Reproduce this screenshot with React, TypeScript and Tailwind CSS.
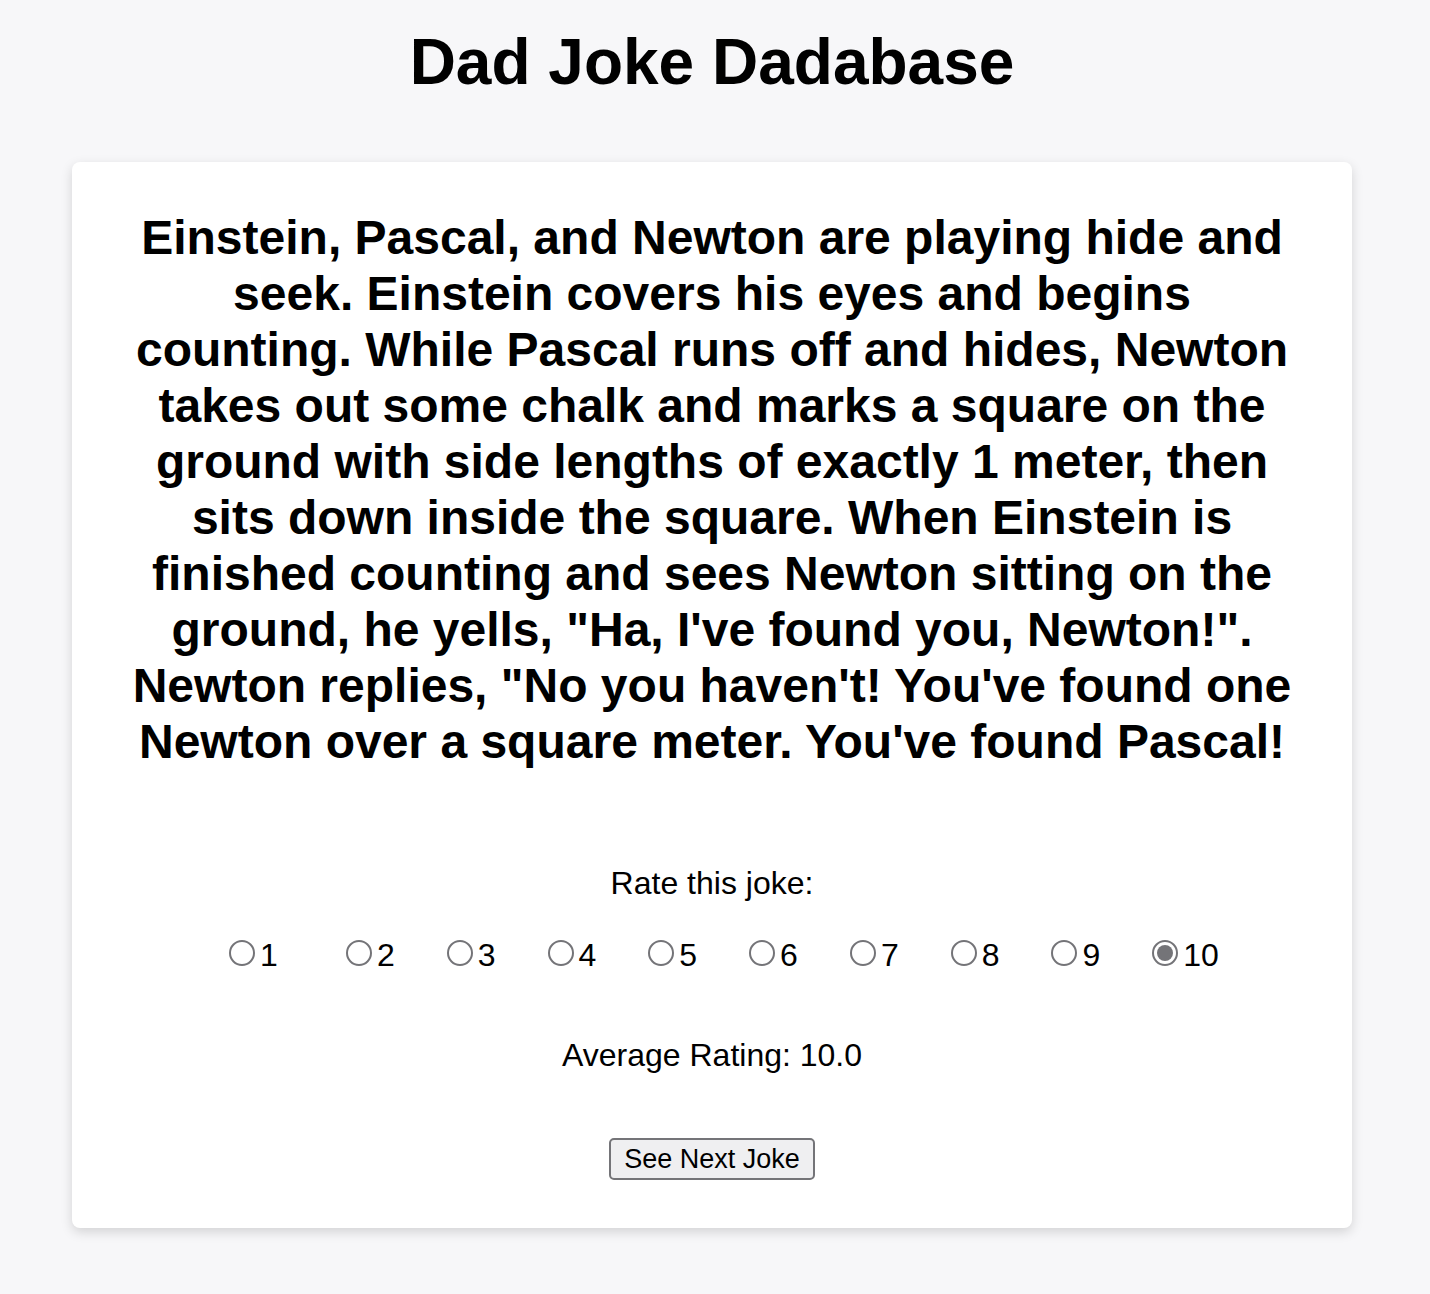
import { useState } from "react";

const JOKE =
  "Einstein, Pascal, and Newton are playing hide and seek. Einstein covers his eyes and begins counting. While Pascal runs off and hides, Newton takes out some chalk and marks a square on the ground with side lengths of exactly 1 meter, then sits down inside the square. When Einstein is finished counting and sees Newton sitting on the ground, he yells, \"Ha, I've found you, Newton!\". Newton replies, \"No you haven't! You've found one Newton over a square meter. You've found Pascal!";

const RATINGS = [1, 2, 3, 4, 5, 6, 7, 8, 9, 10];

export default function App() {
  const [rating, setRating] = useState(10);

  return (
    <main className="min-h-screen bg-[#f7f7f9] pt-6 pr-[78px] pb-16 pl-[72px] text-center font-['Liberation_Sans',Arial,sans-serif] text-black">
      <h1 className="text-[64px] leading-[76px] font-bold">Dad Joke Dadabase</h1>
      <section className="mt-[62px] rounded-lg bg-white px-14 py-12 shadow-[0_4px_12px_rgba(0,0,0,0.15)]">
        <h2 className="text-[48px] leading-[56px] font-bold">{JOKE}</h2>
        <fieldset className="mt-24">
          <legend className="w-full text-[32px] leading-[34px]">Rate this joke:</legend>
          <div className="mt-[38px] flex justify-center gap-[52px] pl-6">
            {RATINGS.map((value) => (
              <label key={value} className="flex items-start gap-[5px] text-[32px] leading-[34px] first:mr-4">
                <input
                  type="radio"
                  name="rating"
                  value={value}
                  checked={rating === value}
                  onChange={() => setRating(value)}
                  className="mt-0.5 grid size-[26px] appearance-none place-items-center rounded-full border-2 border-[#747478] bg-white before:size-4 before:rounded-full checked:before:bg-[#747478]"
                />
                {value}
              </label>
            ))}
          </div>
        </fieldset>
        <p className="mt-[66px] text-[32px] leading-[34px]">Average Rating: {rating.toFixed(1)}</p>
        <button
          type="button"
          className="mt-[66px] rounded-[5px] border-2 border-[#747478] bg-[#efeff1] px-[13px] py-1 text-[27px] leading-[30px]"
        >
          See Next Joke
        </button>
      </section>
    </main>
  );
}
